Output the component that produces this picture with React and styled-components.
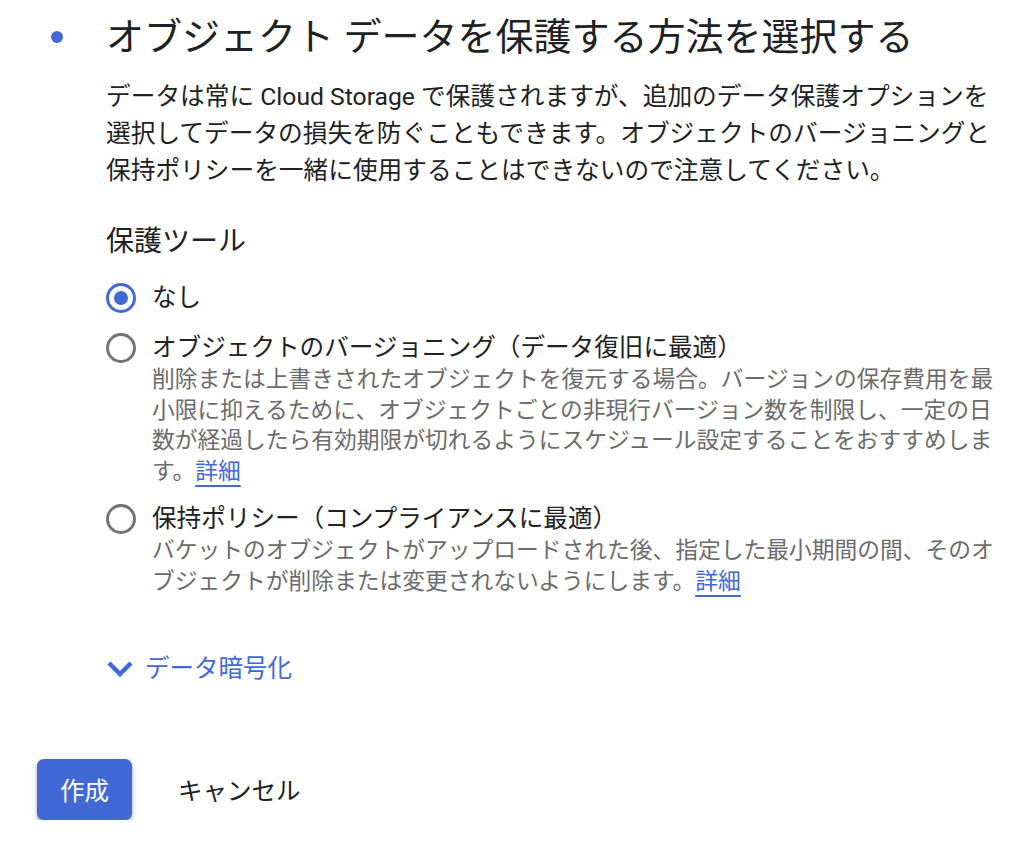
import React, { useState } from 'react';
import styled, { createGlobalStyle } from 'styled-components';

const GlobalStyle = createGlobalStyle`
  body {
    margin: 0;
    background: #ffffff;
    font-family: Roboto, "Noto Sans CJK JP", sans-serif;
    color: #202124;
  }
`;

const Page = styled.div`
  padding: 13px 0 0 0;
  width: 1024px;
  box-sizing: border-box;
`;

const Header = styled.div`
  display: flex;
  align-items: center;
`;

const Bullet = styled.div`
  width: 106px;
  display: flex;
  justify-content: center;
  padding-left: 8px;
  box-sizing: border-box;

  &::before {
    content: '';
    width: 12px;
    height: 12px;
    border-radius: 50%;
    background: #4169d6;
  }
`;

const Title = styled.h1`
  margin: 0;
  font-size: 38px;
  line-height: 48px;
  font-weight: 400;
  color: #202124;
`;

const Body = styled.div`
  padding-left: 106px;
  padding-right: 28px;
`;

const Intro = styled.p`
  margin: 17px 0 0;
  font-size: 24.7px;
  line-height: 37px;
  color: #202124;
`;

const SectionTitle = styled.h2`
  margin: 33px 0 0;
  font-size: 28px;
  line-height: 40px;
  font-weight: 400;
  color: #202124;
`;

const Options = styled.div`
  margin-top: 18px;
  display: flex;
  flex-direction: column;
  gap: 14px;
`;

const Option = styled.label`
  display: flex;
  align-items: flex-start;
  gap: 16px;
  cursor: pointer;
`;

const Radio = styled.span`
  flex: none;
  width: 30px;
  height: 30px;
  margin-top: 3px;
  box-sizing: border-box;
  border-radius: 50%;
  border: 3.5px solid ${p => (p.$checked ? '#4169d6' : '#737373')};
  display: flex;
  align-items: center;
  justify-content: center;

  &::after {
    content: '';
    width: 14px;
    height: 14px;
    border-radius: 50%;
    background: ${p => (p.$checked ? '#4169d6' : 'transparent')};
  }
`;

const OptionText = styled.div`
  display: flex;
  flex-direction: column;
`;

const OptionLabel = styled.div`
  font-size: 24.6px;
  line-height: 36px;
  color: #202124;
`;

const OptionDesc = styled.div`
  font-size: 22.75px;
  line-height: 30.5px;
  color: #6b6b6b;
  margin-top: -1px;
`;

const Link = styled.a`
  color: #4169d6;
  text-decoration: underline;
  text-decoration-thickness: 2px;
  text-underline-offset: 6px;
`;

const Expander = styled.button`
  margin: 54px 0 0 0;
  padding: 0;
  border: 0;
  background: none;
  display: flex;
  align-items: center;
  gap: 11px;
  font-family: inherit;
  font-size: 24.5px;
  line-height: 36px;
  color: #4169d6;
  cursor: pointer;
`;

const Actions = styled.div`
  margin-top: 72px;
  padding-left: 37px;
  display: flex;
  align-items: center;
  gap: 18px;
`;

const Button = styled.button`
  height: 61px;
  padding: 0 ${p => (p.$primary ? '23px' : '28px')};
  border: 0;
  border-radius: 7px;
  font-family: inherit;
  font-size: 24.5px;
  background: ${p => (p.$primary ? '#4169d6' : 'transparent')};
  color: ${p => (p.$primary ? '#ffffff' : '#202124')};
  box-shadow: ${p =>
    p.$primary ? '0 2px 3px rgba(0,0,0,0.3), 0 2px 6px 1px rgba(0,0,0,0.12)' : 'none'};
  cursor: pointer;
`;

const Chevron = () => (
  <svg width="28" height="18" viewBox="0 0 28 18">
    <polyline points="3,3 14,14 25,3" fill="none" stroke="#4169d6" strokeWidth="4.5" />
  </svg>
);

const options = [
  { id: 'none', label: 'なし' },
  {
    id: 'versioning',
    label: 'オブジェクトのバージョニング（データ復旧に最適）',
    desc: '削除または上書きされたオブジェクトを復元する場合。バージョンの保存費用を最小限に抑えるために、オブジェクトごとの非現行バージョン数を制限し、一定の日数が経過したら有効期限が切れるようにスケジュール設定することをおすすめします。',
  },
  {
    id: 'retention',
    label: '保持ポリシー（コンプライアンスに最適）',
    desc: 'バケットのオブジェクトがアップロードされた後、指定した最小期間の間、そのオブジェクトが削除または変更されないようにします。',
  },
];

export default function App() {
  const [selected, setSelected] = useState('none');

  return (
    <>
      <GlobalStyle />
      <Page>
        <Header>
          <Bullet />
          <Title>オブジェクト データを保護する方法を選択する</Title>
        </Header>
        <Body>
          <Intro>
            データは常に Cloud Storage で保護されますが、追加のデータ保護オプションを選択してデータの損失を防ぐこともできます。オブジェクトのバージョニングと保持ポリシーを一緒に使用することはできないので注意してください。
          </Intro>
          <SectionTitle>保護ツール</SectionTitle>
          <Options>
            {options.map(o => (
              <Option key={o.id} onClick={() => setSelected(o.id)}>
                <Radio $checked={selected === o.id} />
                <OptionText>
                  <OptionLabel>{o.label}</OptionLabel>
                  {o.desc && (
                    <OptionDesc>
                      {o.desc}
                      <Link href="#">詳細</Link>
                    </OptionDesc>
                  )}
                </OptionText>
              </Option>
            ))}
          </Options>
          <Expander>
            <Chevron />
            データ暗号化
          </Expander>
        </Body>
        <Actions>
          <Button $primary>作成</Button>
          <Button>キャンセル</Button>
        </Actions>
      </Page>
    </>
  );
}
